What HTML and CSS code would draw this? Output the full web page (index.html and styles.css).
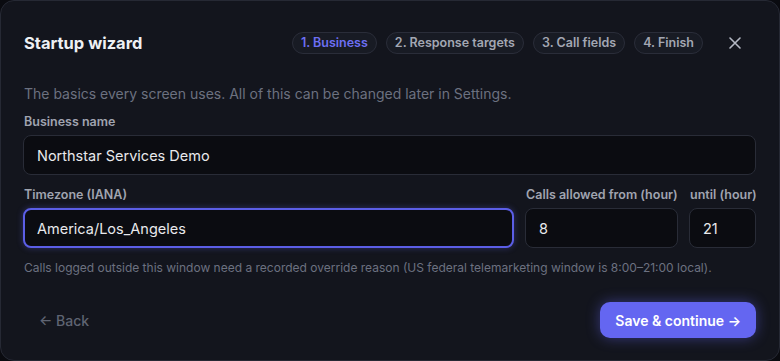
FILE: index.html
```html
<!DOCTYPE html>
<html lang="en">
<head>
    <meta charset="UTF-8">
    <meta name="viewport" content="width=device-width, initial-scale=1.0">
    <title>Startup wizard</title>
    <link rel="stylesheet" href="styles.css">
</head>
<body>
    <div class="modal">
        <div class="header">
            <h2>Startup wizard</h2>
            <div class="steps">
                <span class="step active">1. Business</span>
                <span class="step">2. Response targets</span>
                <span class="step">3. Call fields</span>
                <span class="step">4. Finish</span>
            </div>
            <button class="close" aria-label="Close">
                <svg width="12" height="12" viewBox="0 0 12 12"><path d="M1 1 L11 11 M11 1 L1 11" stroke="currentColor" stroke-width="1.6" stroke-linecap="round"/></svg>
            </button>
        </div>

        <p class="intro">The basics every screen uses. All of this can be changed later in Settings.</p>

        <label class="field">
            <span class="label">Business name</span>
            <input type="text" value="Northstar Services Demo">
        </label>

        <div class="row">
            <label class="field">
                <span class="label">Timezone (IANA)</span>
                <input type="text" class="focused" value="America/Los_Angeles">
            </label>
            <label class="field">
                <span class="label">Calls allowed from (hour)</span>
                <input type="text" value="8">
            </label>
            <label class="field">
                <span class="label">until (hour)</span>
                <input type="text" value="21">
            </label>
        </div>
        <p class="hint">Calls logged outside this window need a recorded override reason (US federal telemarketing window is 8:00–21:00 local).</p>

        <div class="footer">
            <button class="back">← Back</button>
            <button class="primary">Save &amp; continue →</button>
        </div>
    </div>
</body>
</html>
```

FILE: styles.css
```css
html, body {
    height: 100%;
}
body {
    background-color: #0a0b10;
    color: #e6e7ea;
    font-family: Inter, 'Noto Sans', sans-serif;
    margin: 0;
    padding: 0;
}
.modal {
    box-sizing: border-box;
    height: 100%;
    background: #13151d;
    border: 1px solid #262934;
    border-radius: 14px;
    padding: 0 23px 0 22px;
    display: flex;
    flex-direction: column;
}
.header {
    display: flex;
    align-items: center;
    height: 24px;
    margin-top: 30px;
    padding-left: 1px;
}
.header h2 {
    margin: 0;
    font-size: 16.5px;
    font-weight: 700;
    color: #eef0f4;
    flex: 1;
}
.steps {
    display: flex;
    gap: 9px;
}
.step {
    font-size: 12.5px;
    font-weight: 600;
    color: #a3a7b3;
    background: #181b24;
    border: 1px solid #2a2d39;
    border-radius: 11px;
    height: 20px;
    line-height: 20px;
    padding: 0 8px;
}
.step.active {
    color: #6d6ff2;
}
.close {
    background: none;
    border: none;
    color: #b4b8c4;
    padding: 0;
    margin: 0 15px 0 26px;
    width: 12px;
    height: 12px;
    display: flex;
    cursor: pointer;
}
.intro {
    margin: 29px 0 0 1px;
    font-size: 14px;
    line-height: 20px;
    color: #6c7180;
}
.field {
    display: flex;
    flex-direction: column;
}
.intro + .field {
    margin-top: 10px;
}
.label {
    font-size: 12.5px;
    font-weight: 600;
    line-height: 16px;
    color: #a0a4b0;
    margin: 0 0 5px 1px;
    white-space: nowrap;
}
input {
    box-sizing: border-box;
    height: 40px;
    width: 100%;
    background: #0b0c11;
    border: 1px solid #292c37;
    border-radius: 8px;
    padding: 0 13px;
    font-family: inherit;
    font-size: 14.5px;
    color: #e8e9ec;
    outline: none;
}
input.focused {
    border: 2px solid #5b5ee6;
    padding: 0 12px;
    box-shadow: 0 0 6px rgba(99, 102, 241, 0.35);
}
.row {
    display: grid;
    grid-template-columns: 1fr 153px 67px;
    gap: 11px;
    margin-top: 12px;
}
.hint {
    margin: 12px 0 0 1px;
    font-size: 12px;
    line-height: 16px;
    color: #6c7180;
}
.footer {
    display: flex;
    justify-content: space-between;
    align-items: center;
    margin-top: 26px;
}
.back {
    background: none;
    border: none;
    font-family: inherit;
    font-size: 14px;
    font-weight: 500;
    color: #5f6472;
    padding: 8px 16px;
    cursor: pointer;
}
.primary {
    background: #6466f1;
    border: none;
    border-radius: 10px;
    color: #ffffff;
    font-family: inherit;
    font-size: 14px;
    font-weight: 600;
    height: 36px;
    padding: 0 15px;
    box-shadow: 0 0 14px rgba(99, 102, 241, 0.45);
    cursor: pointer;
}
```
